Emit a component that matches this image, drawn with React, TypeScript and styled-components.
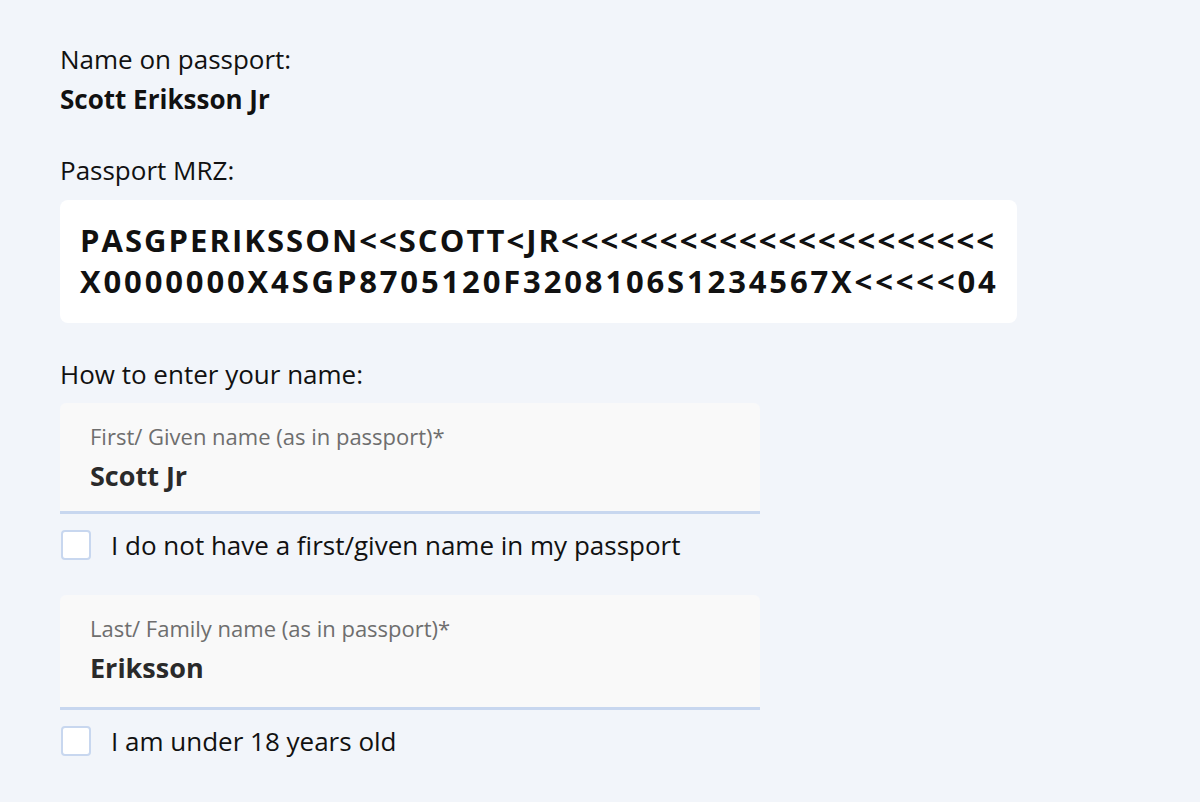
import React, { useState } from "react";
import styled, { createGlobalStyle } from "styled-components";

const GlobalStyle = createGlobalStyle`
  html, body {
    margin: 0;
    padding: 0;
    background: #f2f5fa;
  }
  body {
    font-family: "Open Sans", Lato, sans-serif;
    color: #111;
  }
`;

const App: React.FC = () => {
  const [noFirstName, setNoFirstName] = useState(false);
  const [underAge, setUnderAge] = useState(false);

  return (
    <>
      <GlobalStyle />
      <Page>
        <Section>
          <Label>Name on passport:</Label>
          <NameValue>Scott Eriksson Jr</NameValue>
        </Section>

        <Section>
          <Label>Passport MRZ:</Label>
          <MrzBox>
            <MrzLine $spacing={2.05}>PASGPERIKSSON&lt;&lt;SCOTT&lt;JR&lt;&lt;&lt;&lt;&lt;&lt;&lt;&lt;&lt;&lt;&lt;&lt;&lt;&lt;&lt;&lt;&lt;&lt;&lt;&lt;&lt;&lt;</MrzLine>
            <MrzLine $spacing={2.85}>X0000000X4SGP8705120F3208106S1234567X&lt;&lt;&lt;&lt;&lt;04</MrzLine>
          </MrzBox>
        </Section>

        <Section>
          <Label>How to enter your name:</Label>
          <Field $top={9} $height={111}>
            <FieldLabel>First/ Given name (as in passport)*</FieldLabel>
            <FieldValue>Scott Jr</FieldValue>
          </Field>
          <CheckRow>
            <CheckBox
              type="checkbox"
              checked={noFirstName}
              onChange={() => setNoFirstName(!noFirstName)}
            />
            I do not have a first/given name in my passport
          </CheckRow>

          <Field $top={34} $height={115}>
            <FieldLabel>Last/ Family name (as in passport)*</FieldLabel>
            <FieldValue>Eriksson</FieldValue>
          </Field>
          <CheckRow>
            <CheckBox
              type="checkbox"
              checked={underAge}
              onChange={() => setUnderAge(!underAge)}
            />
            I am under 18 years old
          </CheckRow>
        </Section>
      </Page>
    </>
  );
};

export default App;

// Styled components
const Page = styled.div`
  padding: 39px 60px 0;
  display: flex;
  flex-direction: column;
  gap: 31px;
`;

const Section = styled.div`
  display: flex;
  flex-direction: column;
`;

const Label = styled.div`
  font-size: 26px;
  line-height: 40px;
  color: #111;
`;

const NameValue = styled.div`
  font-size: 26px;
  line-height: 40px;
  font-weight: 700;
  color: #111;
`;

const MrzBox = styled.div`
  margin-top: 10px;
  width: 957px;
  box-sizing: border-box;
  background: #fff;
  border-radius: 8px;
  padding: 20px 20px 21px;
`;

const MrzLine = styled.div<{ $spacing: number }>`
  font-size: 31px;
  line-height: 41px;
  font-weight: 700;
  letter-spacing: ${(p) => p.$spacing}px;
  color: #111;
  white-space: nowrap;
`;

const Field = styled.div<{ $top: number; $height: number }>`
  margin-top: ${(p) => p.$top}px;
  width: 700px;
  height: ${(p) => p.$height}px;
  box-sizing: border-box;
  background: #f9f9f9;
  border-radius: 6px 6px 0 0;
  border-bottom: 3px solid #c8d7ef;
  padding: 20px 30px 0;
`;

const FieldLabel = styled.div`
  font-size: 22px;
  line-height: 26px;
  color: #6e6e6e;
`;

const FieldValue = styled.div`
  margin-top: 12px;
  font-size: 27px;
  line-height: 30px;
  font-weight: 700;
  color: #2a2a2a;
`;

const CheckRow = styled.label`
  margin-top: 15px;
  display: flex;
  align-items: center;
  gap: 20px;
  font-size: 26px;
  line-height: 32px;
  color: #111;
  cursor: pointer;
`;

const CheckBox = styled.input`
  appearance: none;
  margin: 0 0 0 1px;
  width: 30px;
  height: 30px;
  box-sizing: border-box;
  background: #fff;
  border: 2px solid #c8d7ef;
  border-radius: 4px;
  cursor: pointer;

  &:checked {
    background: #3b6fd8;
    border-color: #3b6fd8;
  }
`;
